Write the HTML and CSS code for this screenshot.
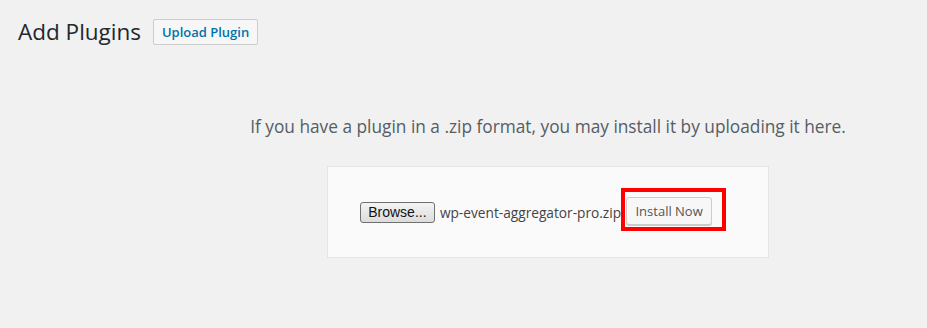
FILE: index.html
```html
<!DOCTYPE html>
<html lang="en">
<head>
    <meta charset="UTF-8">
    <title>Add Plugins</title>
    <link rel="stylesheet" href="styles.css">
</head>
<body>
    <div class="wrap">
        <div class="page-header">
            <h1>Add Plugins</h1>
            <button class="page-title-action">Upload Plugin</button>
        </div>

        <div class="upload-plugin">
            <p class="install-help">If you have a plugin in a .zip format, you may install it by uploading it here.</p>
            <form class="upload-form">
                <button type="button" class="browse">Browse...</button>
                <span class="file-name">wp-event-aggregator-pro.zip</span>
                <span class="highlight">
                    <button type="button" class="install-now">Install Now</button>
                </span>
            </form>
        </div>
    </div>
</body>
</html>
```

FILE: styles.css
```css
* {
    box-sizing: border-box;
    margin: 0;
    padding: 0;
}

body {
    background: #f1f1f1;
    color: #444;
    font-family: "Open Sans", "Noto Sans", sans-serif;
    font-size: 13px;
    width: 927px;
    height: 328px;
    overflow: hidden;
}

.wrap {
    padding: 18px 0 0 18px;
}

.page-header {
    display: flex;
    align-items: center;
    gap: 12px;
}

h1 {
    font-size: 22.5px;
    font-weight: 400;
    color: #23282d;
    line-height: 28px;
}

.page-title-action {
    font-family: inherit;
    font-size: 13px;
    font-weight: 600;
    color: #0073aa;
    background: #f7f7f7;
    border: 1px solid #ccc;
    border-radius: 2px;
    height: 26px;
    width: 105px;
    padding: 0;
}

.upload-plugin {
    margin-left: 151px;
    padding-top: 69px;
    display: flex;
    flex-direction: column;
    align-items: center;
}

.install-help {
    font-size: 17.3px;
    color: #555d66;
    line-height: 24px;
}

.upload-form {
    margin-top: 27px;
    width: 442px;
    height: 92px;
    background: #fafafa;
    border: 1px solid #e5e5e5;
    display: flex;
    align-items: center;
    justify-content: center;
    padding-right: 10px;
}

.browse {
    font-family: "Liberation Sans", Arial, sans-serif;
    font-size: 14px;
    color: #111;
    width: 75px;
    height: 21px;
    background: linear-gradient(#f4f4f4, #dcdcdc);
    border: 1px solid #707070;
    border-radius: 3px;
}

.file-name {
    margin-left: 5px;
    font-size: 13.7px;
    color: #444;
}

.highlight {
    border: 4px solid #ff0000;
    padding: 5px 10px 2px 1px;
    margin-bottom: 5px;
    display: flex;
}

.install-now {
    font-family: inherit;
    font-size: 13px;
    color: #555;
    background: #f7f7f7;
    border: 1px solid #ccc;
    border-radius: 3px;
    box-shadow: 0 1px 0 #ccc;
    width: 86px;
    height: 28px;
}
```
